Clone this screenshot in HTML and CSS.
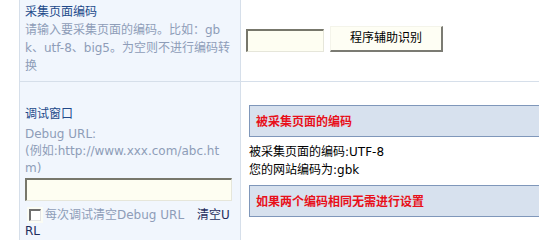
FILE: index.html
```html
<!DOCTYPE html>
<html>
<head>
<meta charset="utf-8">
<link rel="stylesheet" href="styles.css">
</head>
<body>
<div class="table">
  <div class="cell label row1">
    <div class="title">采集页面编码</div>
    <div class="desc">请输入要采集页面的编码。比如：gb<br>k、utf-8、big5。为空则不进行编码转<br>换</div>
  </div>
  <div class="cell value row1 controls">
    <span class="text-input small"></span>
    <span class="btn">程序辅助识别</span>
  </div>
  <div class="cell label row2">
    <div class="title">调试窗口</div>
    <div class="desc tight">Debug URL:<br>(例如:http://www.xxx.com/abc.ht<br>m)</div>
    <span class="text-input wide"></span>
    <div class="opts"><span class="check"></span><span class="opt-text">每次调试清空Debug URL</span><span class="clear">清空U<br>RL</span></div>
  </div>
  <div class="cell value row2 result">
    <div class="notice">被采集页面的编码</div>
    <div class="lines">被采集页面的编码:UTF-8<br>您的网站编码为:gbk</div>
    <div class="notice">如果两个编码相同无需进行设置</div>
  </div>
</div>
</body>
</html>
```
FILE: styles.css
```css
html, body {
  margin: 0;
  padding: 0;
  overflow: hidden;
  background: #ffffff;
}
body {
  font-family: "DejaVu Sans", "Noto Sans CJK SC", sans-serif;
  font-size: 12px;
  line-height: 18px;
  color: #000;
}
.table {
  display: grid;
  grid-template-columns: 222px 298px;
  margin-left: 19px;
  width: 520px;
}
.cell {
  border-bottom: 1px solid #d6dfea;
  box-sizing: border-box;
}
.label {
  background: #f1f6fd;
  border-left: 1px solid #d6dfea;
  border-right: 1px solid #d6dfea;
  padding-left: 5px;
  padding-right: 5px;
}
.row1 {
  height: 82px;
}
.row1.label {
  padding-top: 3px;
}
.row2 {
  padding-top: 23px;
  height: 170px;
}
.title {
  color: #21498a;
}
.desc {
  color: #8e9db8;
  word-break: break-all;
}
.desc.tight {
  margin-top: 3px;
  line-height: 17px;
}
.text-input {
  display: block;
  box-sizing: border-box;
  background: #fefef2;
  border-style: solid;
  border-width: 2px 1px 1px 2px;
  border-color: #77776b #e6e6da #e6e6da #77776b;
}
.text-input.small {
  width: 78px;
  height: 23px;
}
.text-input.wide {
  width: 207px;
  height: 23px;
  margin-top: 1px;
}
.opts {
  margin-top: 6px;
  line-height: 16px;
  color: #8e9db8;
}
.check {
  display: inline-block;
  box-sizing: border-box;
  width: 12px;
  height: 12px;
  margin: 0 4px 0 4px;
  vertical-align: -2px;
  background: #ffffff;
  border-style: solid;
  border-width: 2px 1px 1px 2px;
  border-color: #6f6f6f #e4e4e4 #e4e4e4 #6f6f6f;
  box-shadow: 0 0 0 2px #fbfcf4;
}
.clear {
  color: #1f2d5c;
  margin-left: 13px;
}
.controls {
  display: flex;
  align-items: flex-end;
  gap: 6px;
  padding: 26px 0 0 5px;
}
.controls .text-input.small {
  margin-bottom: 29px;
}
.btn {
  box-sizing: border-box;
  width: 113px;
  height: 26px;
  margin-bottom: 29px;
  background: #fefef4;
  border-style: solid;
  border-width: 1px 2px 2px 1px;
  border-color: #f4f4ea #7b7b73 #7b7b73 #f4f4ea;
  text-align: center;
  line-height: 23px;
  color: #000;
}
.result {
  padding-left: 8px;
}
.notice {
  box-sizing: border-box;
  height: 32px;
  line-height: 30px;
  padding-left: 6px;
  background: #d7e1ee;
  border: 1px solid #7f97ba;
  border-right: 0;
  color: #e8101a;
  font-weight: bold;
  font-family: "Noto Sans CJK SC", sans-serif;
}
.lines {
  margin: 6px 0 6px 0;
  line-height: 18px;
}
```
